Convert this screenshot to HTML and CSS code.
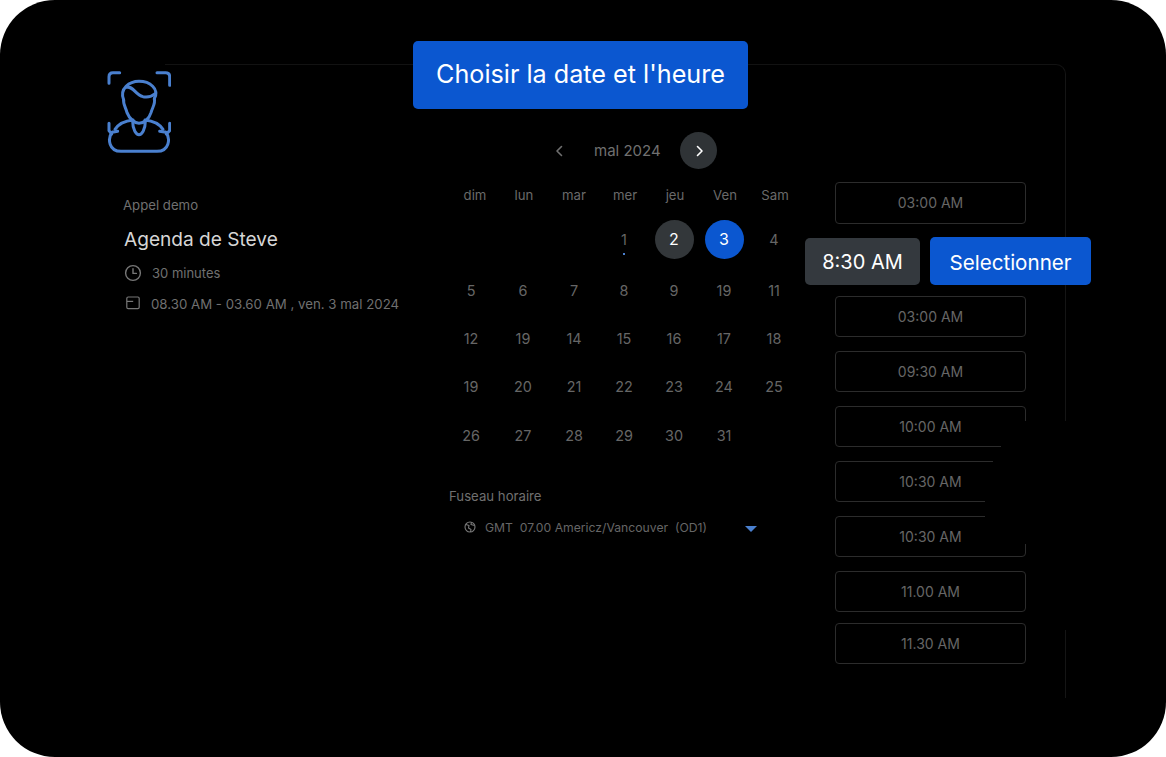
FILE: index.html
```html
<!DOCTYPE html>
<html lang="fr">
<head>
<meta charset="utf-8">
<title>Choisir la date et l'heure</title>
<link rel="stylesheet" href="styles.css">
</head>
<body>
<div class="stage">
  <div class="panel">
    <aside class="info">
      <svg class="logo" viewBox="20 22 192 255" fill="none" stroke="#4a80cf" stroke-width="9" stroke-linecap="round" stroke-linejoin="round">
        <path d="M26 62V42Q26 30 38 30H58"/>
        <path d="M170 30H196Q208 30 208 42V68"/>
        <path d="M26 182V204L34 214"/>
        <path d="M208 182V204L198 214"/>
        <path d="M40 208L52 206M192 208L178 206"/>
        <path d="M44 200C56 182 78 174 98 172M188 200C176 182 154 174 134 172"/>
        <path d="M36 208C20 228 26 266 62 266H170C206 266 212 228 196 208"/>
        <path d="M97 176C97 202 108 216 116 216C124 216 135 202 135 176"/>
        <path d="M70 112C68 124 76 134 80 150C88 170 104 182 116 182C130 182 146 170 152 150C156 134 166 124 162 108"/>
        <path d="M70 112C56 78 88 56 116 56C148 56 178 78 162 108"/>
        <path d="M78 74C98 68 104 96 128 102C142 105 154 102 166 92"/>
      </svg>
      <p class="eyebrow">Appel demo</p>
      <h1 class="agenda">Agenda de Steve</h1>
      <div class="meta meta-time">
        <svg class="meta-icon" viewBox="0 0 18 18" fill="none" stroke="#777" stroke-width="1.4" stroke-linecap="round" stroke-linejoin="round"><circle cx="9" cy="9" r="7.4"/><path d="M9 4.8V9.4H12.4"/></svg>
        <span>30 minutes</span>
      </div>
      <div class="meta meta-date">
        <svg class="cal-icon" viewBox="0 0 14 14" fill="none" stroke="#777" stroke-width="1.2" stroke-linejoin="round"><rect x="0.8" y="1" width="12.4" height="11.6" rx="1.4"/><path d="M0.8 5.4H7.2"/></svg>
        <span>08.30 AM - 03.60 AM , ven. 3 mal 2024</span>
      </div>
    </aside>

    <section class="calendar">
      <div class="month-nav">
        <svg class="chev" viewBox="0 0 20 20" fill="none" stroke="#6f6f6f" stroke-width="1.6" stroke-linecap="round" stroke-linejoin="round"><path d="M12.5 5.5L8 10L12.5 14.5"/></svg>
        <span class="month">mal 2024</span>
        <span class="next"><svg viewBox="0 0 20 20" fill="none" stroke="#fff" stroke-width="1.6" stroke-linecap="round" stroke-linejoin="round"><path d="M8.5 5.5L13 10L8.5 14.5"/></svg></span>
      </div>
      <div class="weekdays">
        <span>dim</span><span>lun</span><span>mar</span><span>mer</span><span>jeu</span><span>Ven</span><span>Sam</span>
      </div>
      <div class="dates">
        <span></span><span></span><span></span>
        <span class="day has-dot">1</span>
        <span class="day pick-grey">2</span>
        <span class="day pick-blue">3</span>
        <span class="day">4</span>
        <span class="day">5</span><span class="day">6</span><span class="day">7</span><span class="day">8</span><span class="day">9</span><span class="day">19</span><span class="day">11</span>
        <span class="day">12</span><span class="day">19</span><span class="day">14</span><span class="day">15</span><span class="day">16</span><span class="day">17</span><span class="day">18</span>
        <span class="day">19</span><span class="day">20</span><span class="day">21</span><span class="day">22</span><span class="day">23</span><span class="day">24</span><span class="day">25</span>
        <span class="day">26</span><span class="day">27</span><span class="day">28</span><span class="day">29</span><span class="day">30</span><span class="day">31</span>
      </div>
      <p class="tz-label">Fuseau horaire</p>
      <div class="tz-row">
        <svg class="globe" viewBox="0 0 12 12" fill="none" stroke="#7a7a7a" stroke-width="1.1"><circle cx="6" cy="6" r="5"/><path d="M2 3.5L5 4.5L4.5 7L7 8.5L6.5 11M7.5 1.2L7 3.5L10.5 4.5" stroke-linejoin="round"/></svg>
        <span class="tz-text">GMT&nbsp; 07.00 Americz/Vancouver&nbsp; (OD1)</span>
        <span class="caret"></span>
      </div>
    </section>

    <section class="slots">
      <div class="slot slot-first">03:00 AM</div>
      <div class="slot-active">
        <span class="chip">8:30 AM</span>
        <span class="select">Selectionner</span>
      </div>
      <div class="slot">03:00 AM</div>
      <div class="slot">09:30 AM</div>
      <div class="slot">10:00 AM</div>
      <div class="slot">10:30 AM</div>
      <div class="slot">10:30 AM</div>
      <div class="slot">11.00 AM</div>
      <div class="slot slot-last">11.30 AM</div>
    </section>

    <div class="fade-mask"></div>
    <div class="banner">Choisir la date et l'heure</div>
  </div>
</div>
</body>
</html>
```
FILE: styles.css
```css
* { box-sizing: border-box; }
html, body { margin: 0; padding: 0; background: #fff; }
body { font-family: "Inter", "Liberation Sans", sans-serif; }
p, h1 { margin: 0; font-weight: 400; }

.stage {
  width: 1166px;
  height: 757px;
  background: #000;
  border-radius: 55px;
  overflow: hidden;
  padding: 64px 0 0 107px;
}

.panel {
  position: relative;
  width: 959px;
  height: 634px;
  display: grid;
  grid-template-columns: 343px 385px 191px;
  align-items: start;
}
.panel::before {
  content: "";
  position: absolute;
  inset: 0 0 0 58px;
  border-top: 1px solid #121212;
  border-right: 1px solid #151515;
  border-top-right-radius: 10px;
  pointer-events: none;
}

/* left column */
.info { position: relative; padding-top: 6px; }
.logo { display: block; width: 64px; height: 85px; }
.eyebrow { margin: 41px 0 0 16px; font-size: 13.2px; line-height: 18px; color: #707070; }
.agenda { margin: 12px 0 0 17px; font-size: 19.1px; line-height: 26px; color: #d6d6d6; }
.meta { display: flex; align-items: center; margin: 12px 0 0 17px; height: 18px; font-size: 13px; color: #707070; }
.meta-date { margin-top: 13px; font-size: 13.25px; }
.meta-icon { width: 18px; height: 18px; margin-right: 10px; flex: none; }
.cal-icon { width: 14px; height: 14px; margin: -3px 11px 0 2px; flex: none; }

/* calendar */
.calendar { position: relative; }
.month-nav { display: flex; align-items: center; height: 37px; margin: 68px 0 0 99px; }
.chev { width: 20px; height: 20px; flex: none; }
.month { width: 67px; margin-left: 25px; font-size: 15px; color: #707070; white-space: nowrap; }
.next { width: 37px; height: 37px; margin-left: 19px; border-radius: 50%; background: #2f3336; display: flex; align-items: center; justify-content: center; }
.next svg { width: 20px; height: 20px; }

.weekdays {
  display: grid;
  grid-template-columns: 50px 48px 52px 50px 50px 50px 50px;
  justify-items: center;
  align-items: center;
  height: 20px;
  margin-top: 16px;
  font-size: 13.2px;
  color: #6a6a6a;
}
.dates {
  display: grid;
  grid-template-columns: 52px 52px 50px 50px 50px 50px 50px;
  grid-template-rows: 54px 48px 48px 48px 50px;
  justify-items: center;
  align-items: center;
  margin: 7px 0 0 -5px;
  font-size: 14.4px;
  color: #666;
}
.day { position: relative; display: flex; align-items: center; justify-content: center; min-width: 20px; height: 39px; }
.pick-grey, .pick-blue { width: 39px; border-radius: 50%; color: #fff; font-size: 16px; }
.pick-grey { background: #33373a; }
.pick-blue { background: #0b57d0; }
.has-dot::after {
  content: "";
  position: absolute;
  left: 50%;
  bottom: 4px;
  width: 2px;
  height: 2px;
  margin-left: -1px;
  background: #4a80cf;
}

.tz-label { margin: 27px 0 0 -1px; font-size: 13.2px; line-height: 18px; color: #707070; }
.tz-row { display: flex; align-items: center; height: 18px; margin-top: 13px; padding-left: 14px; font-size: 12.2px; color: #666; }
.globe { width: 12px; height: 12px; margin-right: 9px; flex: none; }
.tz-text { width: 260px; white-space: nowrap; }
.caret { width: 0; height: 0; border-style: solid; border-width: 6px 6px 0; border-color: #4a80cf transparent transparent; margin-top: 3px; }

/* slots */
.slots { position: relative; display: flex; flex-direction: column; gap: 14px; margin-top: 118px; }
.slot {
  display: flex;
  align-items: center;
  justify-content: center;
  height: 41px;
  border: 1px solid #2c2c2c;
  border-radius: 4px;
  font-size: 14px;
  color: #666;
}
.slot-first { height: 42px; margin-bottom: -1px; padding-bottom: 2px; }
.slot-last { margin-top: -3px; }
.slot-active { display: flex; gap: 10px; align-items: center; width: 286px; height: 48px; margin: 0 0 -3px -30px; }
.chip, .select { display: flex; align-items: center; justify-content: center; padding-top: 2px; border-radius: 5px; color: #fff; white-space: nowrap; }
.chip { width: 115px; height: 47px; background: #34393e; font-size: 20px; }
.select { width: 161px; height: 48px; background: #0b57d0; font-size: 20.6px; }

/* overlays */
.fade-mask {
  position: absolute;
  left: 875px;
  top: 355px;
  width: 90px;
  height: 215px;
  background: #000;
  clip-path: polygon(33px 2px, 90px 2px, 90px 211px, 48px 211px, 48px 125px, 33px 125px, 3px 111px, 3px 46px, 11px 46px, 11px 31px, 19px 31px, 19px 16px);
}
.banner {
  position: absolute;
  left: 306px;
  top: -23px;
  display: flex;
  align-items: center;
  justify-content: center;
  width: 335px;
  height: 68px;
  padding-bottom: 2px;
  border-radius: 5px;
  background: #0b57d0;
  color: #fff;
  font-size: 25.2px;
  white-space: nowrap;
}
```
